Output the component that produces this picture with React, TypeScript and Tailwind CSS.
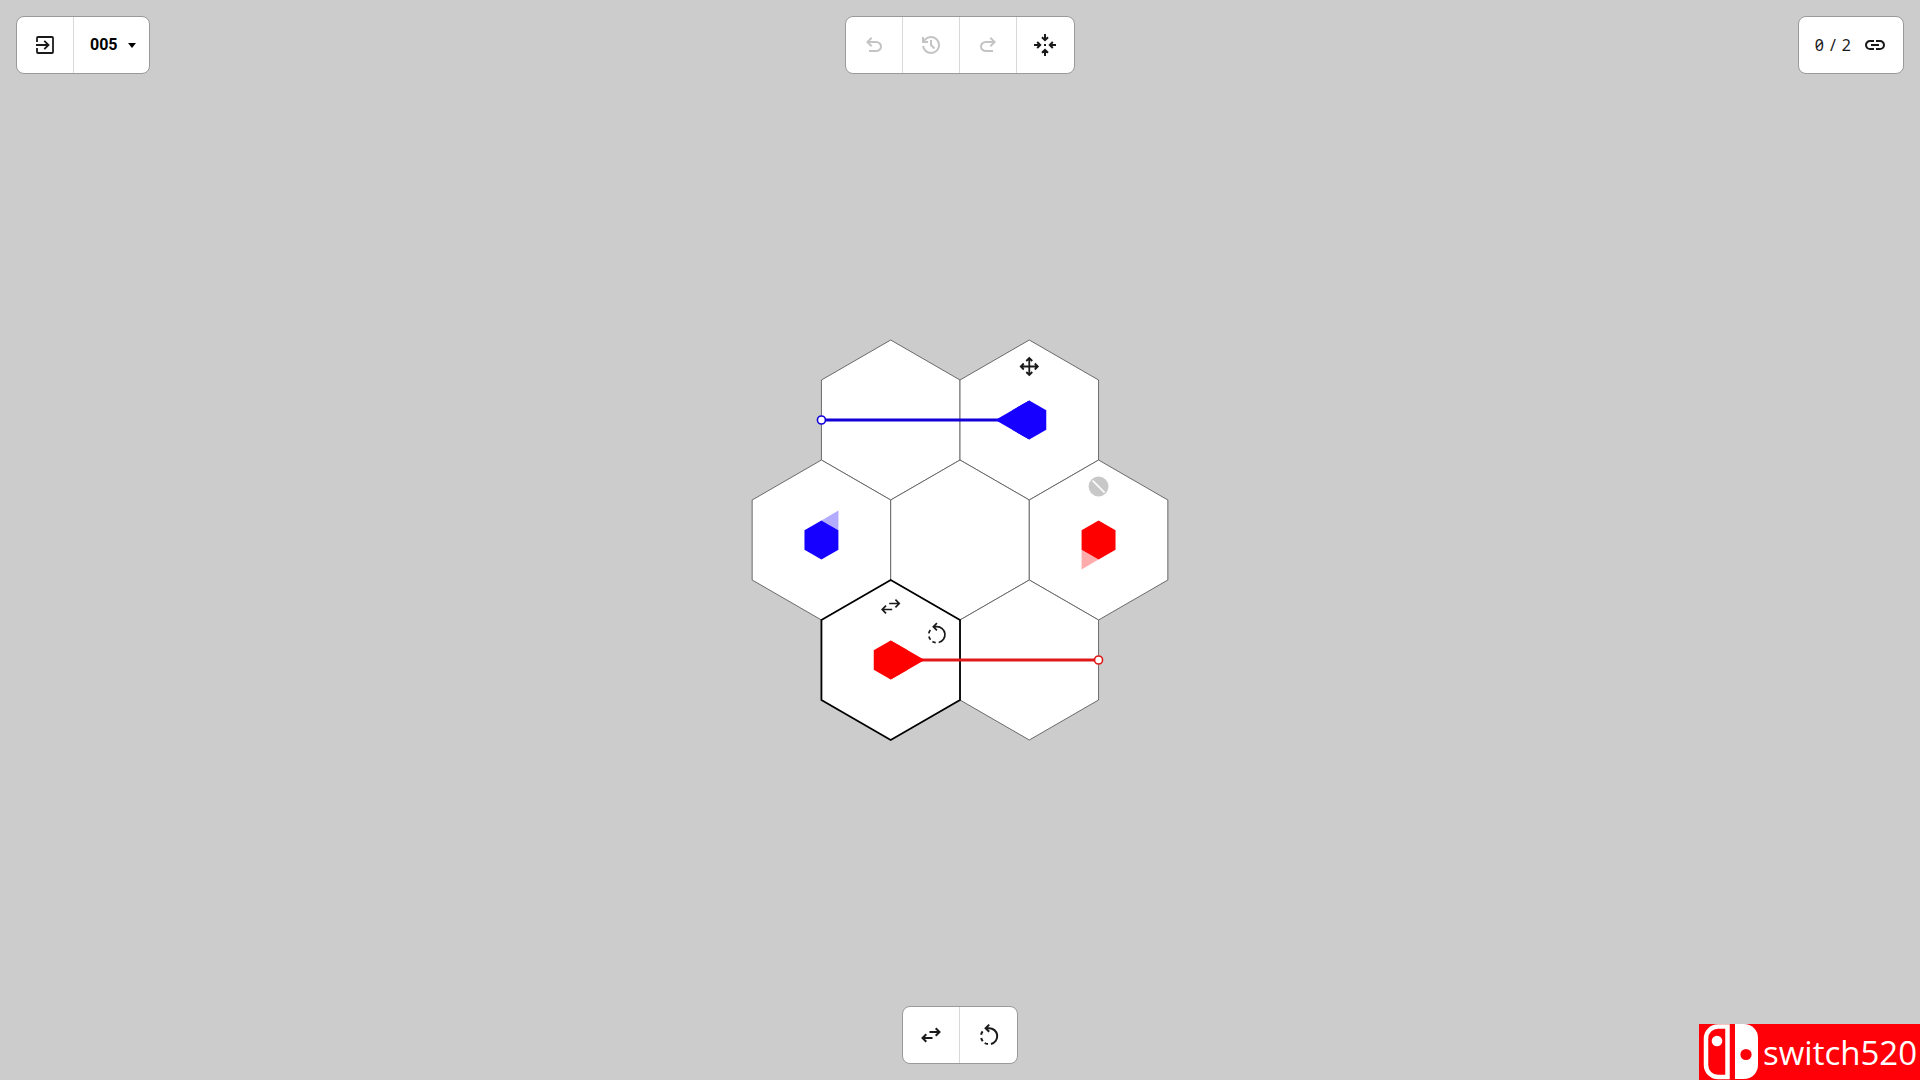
import type { ReactNode } from "react";
import clsx from "clsx";

interface IconProps {
  size?: number;
  x?: number;
  y?: number;
}

interface PieceProps {
  x: number;
  y: number;
  color: string;
  angle: number;
  ghost?: boolean;
}

const HEX = 80;
const HALF = (HEX * Math.sqrt(3)) / 2;
const ROW = HEX * 1.5;

const BLUE = "#1600ff";
const RED = "#ff0000";

const hexPoints = (cx: number, cy: number, r: number) =>
  [0, 1, 2, 3, 4, 5]
    .map((i) => {
      const a = (Math.PI / 3) * i - Math.PI / 2;
      return `${cx + r * Math.cos(a)},${cy + r * Math.sin(a)}`;
    })
    .join(" ");

const cells = [
  [-HALF, -ROW],
  [HALF, -ROW],
  [-2 * HALF, 0],
  [0, 0],
  [2 * HALF, 0],
  [HALF, ROW],
];

const filled = (d: string) =>
  function FilledIcon({ size = 24, ...rest }: IconProps) {
    return (
      <svg width={size} height={size} viewBox="0 0 24 24" fill="currentColor" aria-hidden="true" {...rest}>
        <path d={d} />
      </svg>
    );
  };

const stroked = (d: string, width = 2) =>
  function StrokedIcon({ size = 24, ...rest }: IconProps) {
    return (
      <svg
        width={size}
        height={size}
        viewBox="0 0 24 24"
        fill="none"
        stroke="currentColor"
        strokeWidth={width}
        aria-hidden="true"
        {...rest}
      >
        <path d={d} />
      </svg>
    );
  };

const UNDO_PATH =
  "M7 19v-2h7.1q1.575 0 2.738-1T18 13.5 16.838 11 14.1 10H7.8l2.6 2.6L9 14 4 9l5-5 1.4 1.4L7.8 8h6.3q2.425 0 4.163 1.575T20 13.5t-1.737 3.925T14.1 19z";
const SWAP_PATH = "M10.5 9H20.5M16.7 5.2L20.5 9L16.7 12.8M13.5 15H3.5M7.3 11.2L3.5 15L7.3 18.8";
const ROTATE_PATH =
  "M9 5.2H12A8 8 0 0 1 14 21M12.2 1.6L8.6 5.2L12.2 8.8M11 21.1A8 8 0 0 1 7.7 20M5.8 18.2A8 8 0 0 1 4.2 15M4.1 11.8A8 8 0 0 1 5.6 8.4";

const ExitIcon = stroked(
  "M4 9V5A1 1 0 0 1 5 4H19A1 1 0 0 1 20 5V19A1 1 0 0 1 19 20H5A1 1 0 0 1 4 19V15M3 12H15M11.3 7.8L15.5 12L11.3 16.2",
  1.8,
);
const UndoIcon = filled(UNDO_PATH);
const HistoryIcon = filled(
  "M12 21q-3.45 0-6.012-2.287T3.05 13H5.1q.35 2.6 2.313 4.3T12 19q2.925 0 4.963-2.037T19 12t-2.037-4.962T12 5q-1.725 0-3.225.8T6.25 8H9v2H3V4h2v2.35q1.275-1.6 3.113-2.475T12 3q1.875 0 3.513.713t2.85 1.924 1.925 2.85T21 12t-.712 3.513-1.925 2.85-2.85 1.925T12 21m2.8-4.8L11 12.4V7h2v4.6l3.2 3.2z",
);
const LinkIcon = filled(
  "M11 17H7q-2.075 0-3.537-1.463T2 12t1.463-3.537T7 7h4v2H7q-1.25 0-2.125.875T4 12t.875 2.125T7 15h4zm-3-4v-2h8v2zm5 4v-2h4q1.25 0 2.125-.875T20 12t-.875-2.125T17 9h-4V7h4q2.075 0 3.538 1.463T22 12t-1.463 3.538T17 17z",
);
const CenterIcon = stroked(
  "M12 1V7M9 4.2L12 7.2L15 4.2M12 23V17M9 19.8L12 16.8L15 19.8M1 12H7M4.2 9L7.2 12L4.2 15M23 12H17M19.8 9L16.8 12L19.8 15M11 12H13",
);
const SwapIcon = stroked(SWAP_PATH);
const RotateIcon = stroked(ROTATE_PATH);
const ThinSwapIcon = stroked(SWAP_PATH, 1.7);
const ThinRotateIcon = stroked(ROTATE_PATH, 1.7);
const MoveIcon = stroked(
  "M12 3.5V20.5M3.5 12H20.5M9 6.5L12 3.5L15 6.5M9 17.5L12 20.5L15 17.5M6.5 9L3.5 12L6.5 15M17.5 9L20.5 12L17.5 15",
  1.8,
);

const Panel = ({ children, className }: { children: ReactNode; className?: string }) => (
  <div
    className={clsx(
      "flex h-[58px] w-fit divide-x divide-[#d8d8d8] overflow-hidden rounded-lg border border-[#999999] bg-white",
      className,
    )}
  >
    {children}
  </div>
);

const ToolButton = ({ label, disabled, children }: { label: string; disabled?: boolean; children: ReactNode }) => (
  <button
    type="button"
    aria-label={label}
    disabled={disabled}
    className="flex w-[57px] items-center justify-center text-[#1a1a1a] disabled:text-[#c4c4c4]"
  >
    {children}
  </button>
);

// angle 0 points the tip to the right
const Piece = ({ x, y, color, angle, ghost }: PieceProps) => {
  const r = 19.6;
  const w = (r * Math.sqrt(3)) / 2;
  const tip = ghost ? `${w},${-r / 2} ${2 * w},0 ${w},${r / 2}` : `0,${-r} ${2 * w},0 0,${r}`;
  return (
    <g transform={`translate(${x} ${y})`} fill={color}>
      <polygon points={tip} transform={`rotate(${angle})`} opacity={ghost ? 0.33 : 1} />
      <polygon points={hexPoints(0, 0, r)} />
    </g>
  );
};

const Board = () => (
  <svg width="420" height="404" viewBox="-210 -202 420 404" role="img" aria-label="Board" className="text-[#1a1a1a]">
    {cells.map(([x, y]) => (
      <polygon key={`${x},${y}`} points={hexPoints(x, y, HEX)} fill="#fff" stroke="#6a6a6a" />
    ))}
    <polygon points={hexPoints(-HALF, ROW, HEX)} fill="#fff" stroke="#000" strokeWidth="1.8" />

    <path d={`M${-2 * HALF} ${-ROW}H${HALF - 30}`} stroke="#1200d8" strokeWidth="3" />
    <circle cx={-2 * HALF} cy={-ROW} r="4" fill="#fff" stroke="#1200d8" strokeWidth="1.6" />
    <Piece x={HALF} y={-ROW} color={BLUE} angle={180} />

    <path d={`M${-HALF + 30} ${ROW}H${2 * HALF}`} stroke="#e01818" strokeWidth="3" />
    <circle cx={2 * HALF} cy={ROW} r="4" fill="#fff" stroke="#e01818" strokeWidth="1.6" />
    <Piece x={-HALF} y={ROW} color={RED} angle={0} />

    <Piece x={-2 * HALF} y={0} color={BLUE} angle={-60} ghost />
    <Piece x={2 * HALF} y={0} color={RED} angle={120} ghost />

    <MoveIcon x={HALF - 12} y={-185.5} />
    <g transform={`translate(${2 * HALF} -53.5)`}>
      <circle r="10" fill="#c8c8c8" />
      <path d="M-6 -6L6 6" stroke="#fff" strokeWidth="1.7" />
    </g>
    <ThinSwapIcon x={-HALF - 12} y={54.5} />
    <ThinRotateIcon x={-HALF + 34} y={81.5} />
  </svg>
);

const Watermark = () => (
  <div className="absolute right-0 bottom-0 flex h-14 w-[221px] items-center gap-1 bg-[#ff0009] pl-1 text-white">
    <svg width="56" height="56" viewBox="0 0 56 56" className="shrink-0" aria-hidden="true">
      <path d="M24.5 2.5H15A12 12 0 0 0 3 14.5V41A12 12 0 0 0 15 53H24.5Z" fill="none" stroke="#fff" strokeWidth="4.5" />
      <circle cx="14" cy="17" r="5.3" fill="#fff" />
      <path d="M32 0H41A14 14 0 0 1 55 14V41A14 14 0 0 1 41 55H32Z" fill="#fff" />
      <circle cx="43" cy="30.5" r="5.6" fill="#ff0009" />
    </svg>
    <span className="pt-0.5 font-['Open_Sans','Noto_Sans',sans-serif] text-[33px] leading-10">switch520</span>
  </div>
);

export default function App() {
  return (
    <div className="relative flex min-h-screen flex-col bg-[#cccccc] font-['Roboto',sans-serif]">
      <header className="grid grid-cols-3 p-4">
        <Panel>
          <ToolButton label="Exit">
            <ExitIcon />
          </ToolButton>
          <label className="relative flex">
            <select
              aria-label="Level"
              defaultValue="005"
              className="w-[75px] appearance-none bg-transparent pl-4 text-base font-bold text-black"
            >
              <option>004</option>
              <option>005</option>
              <option>006</option>
            </select>
            <svg
              width="8"
              height="5"
              viewBox="0 0 8 5"
              className="pointer-events-none absolute top-[26px] right-[13px]"
              aria-hidden="true"
            >
              <path d="M0 0H8L4 5Z" />
            </svg>
          </label>
        </Panel>

        <Panel className="justify-self-center">
          <ToolButton label="Undo" disabled>
            <UndoIcon />
          </ToolButton>
          <ToolButton label="History" disabled>
            <HistoryIcon />
          </ToolButton>
          <ToolButton label="Redo" disabled>
            <span className="-scale-x-100">
              <UndoIcon />
            </span>
          </ToolButton>
          <ToolButton label="Center board">
            <CenterIcon />
          </ToolButton>
        </Panel>

        <Panel className="justify-self-end">
          <div className="flex items-center gap-3 px-4 text-[#1a1a1a]">
            <span className="flex gap-1.5 font-['Noto_Sans',sans-serif] text-base slashed-zero">
              <span>0</span>
              <span>/</span>
              <span>2</span>
            </span>
            <LinkIcon />
          </div>
        </Panel>
      </header>

      <main className="flex flex-1 items-center justify-center">
        <Board />
      </main>

      <footer className="flex justify-center p-4">
        <Panel>
          <ToolButton label="Swap">
            <SwapIcon />
          </ToolButton>
          <ToolButton label="Rotate left">
            <RotateIcon />
          </ToolButton>
        </Panel>
      </footer>

      <Watermark />
    </div>
  );
}
